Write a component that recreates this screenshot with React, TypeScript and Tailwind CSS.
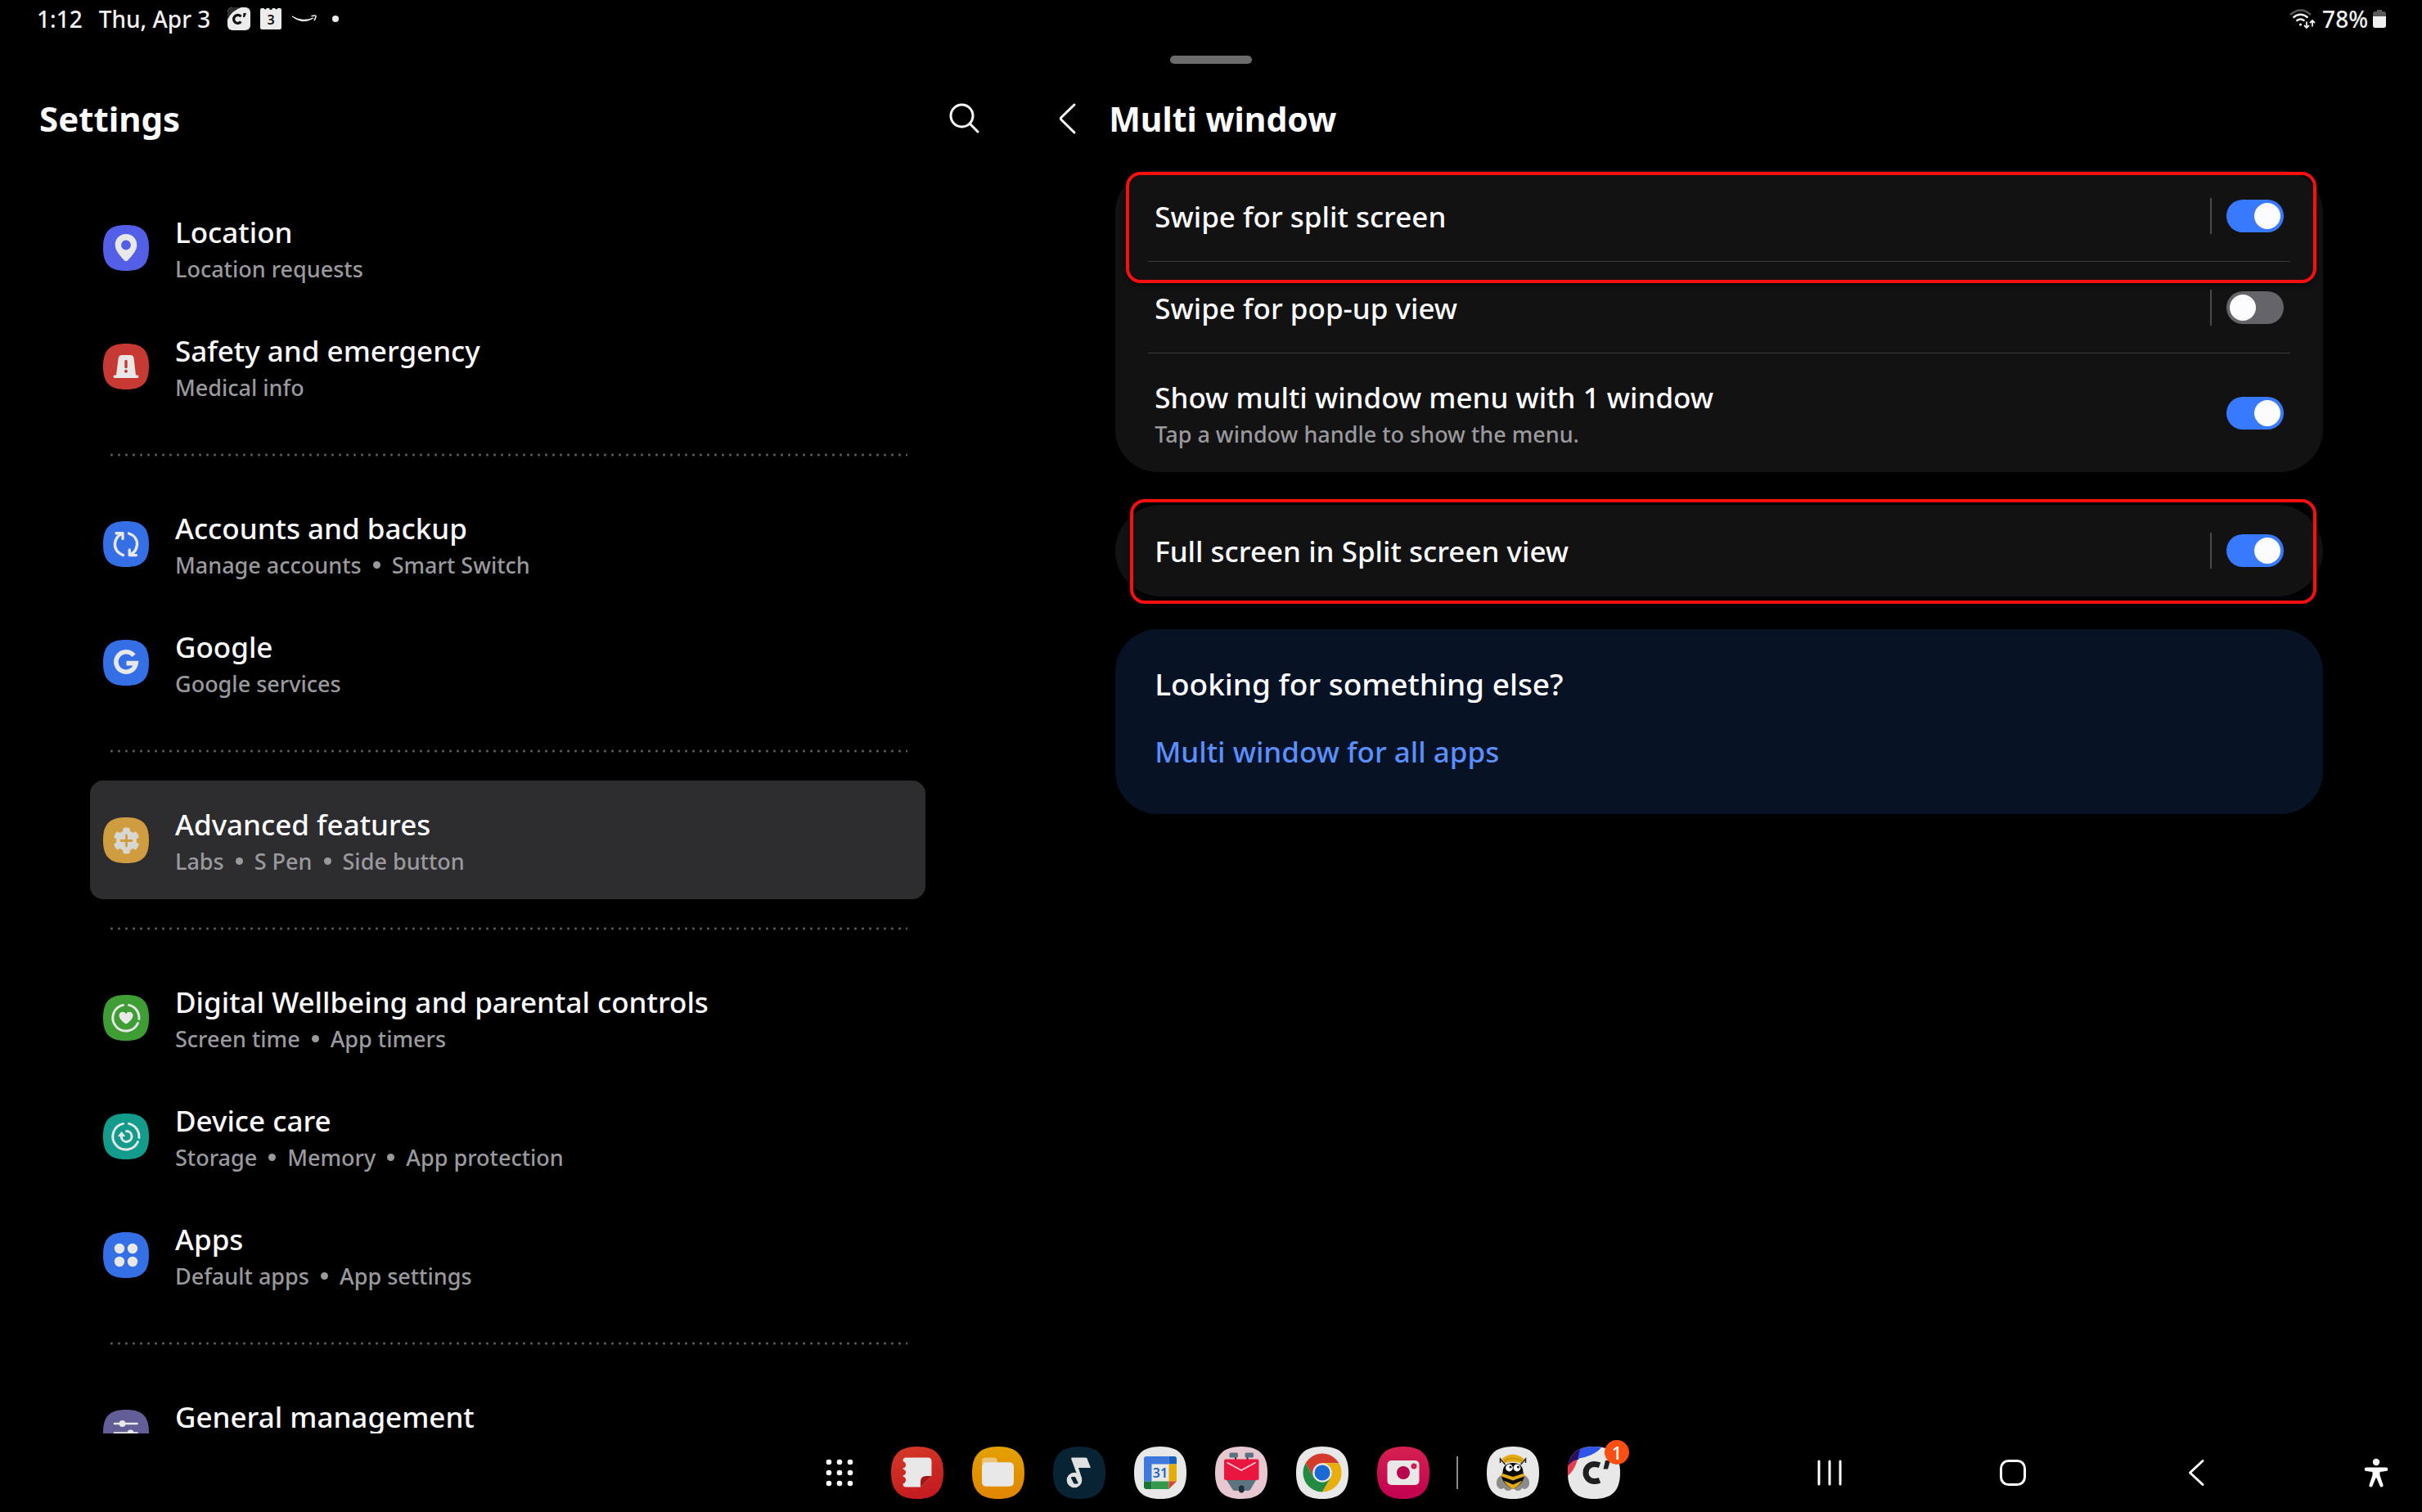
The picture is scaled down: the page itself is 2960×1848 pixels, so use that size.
import { useId, useState } from "react";
import type { ReactNode } from "react";

/* ---------- shared shapes ---------- */

const SQUIRCLE = "M32 0C54 0 64 10 64 32S54 64 32 64 0 54 0 32 10 0 32 0Z";

function SettingIcon({ color, children }: { color: string; children: ReactNode }) {
  return (
    <svg viewBox="0 0 56 56" className="size-14 shrink-0" aria-hidden="true">
      <path d="M28 0C48 0 56 8 56 28S48 56 28 56 0 48 0 28 8 0 28 0Z" fill={color} />
      {children}
    </svg>
  );
}

const INK = "#e8e8e8";

function Ring() {
  return (
    <g fill="none" stroke={INK} strokeWidth="3" strokeLinecap="round">
      <path d="M31.500 12.400A16 16 0 0 1 43.900 29.500" />
      <path d="M42.500 34.500A16 16 0 1 1 24.500 12.400" />
    </g>
  );
}

const icons = {
  location: (
    <SettingIcon color="#535fe6">
      <path
        fillRule="evenodd"
        fill={INK}
        d="M28 11C20.500 11 14.700 16.800 14.700 24.200C14.700 31.500 21 37.500 25.800 43.200Q28 45.400 30.200 43.200C35 37.500 41.300 31.500 41.300 24.200C41.300 16.800 35.500 11 28 11ZM28 18.600A5.900 5.900 0 1 1 28 30.400A5.900 5.900 0 1 1 28 18.600Z"
      />
    </SettingIcon>
  ),
  safety: (
    <SettingIcon color="#c63a33">
      <path fill={INK} d="M23 14H33.500Q37 14 37.500 17.500L40 38.500H42A1.800 1.800 0 0 1 42 42H14A1.800 1.800 0 0 1 14 38.500H16L18.700 17.500Q19.200 14 23 14Z" />
      <path d="M28 21.500V28.500" stroke="#c63a33" strokeWidth="3.400" strokeLinecap="round" />
      <circle cx="28" cy="33.700" r="2" fill="#c63a33" />
    </SettingIcon>
  ),
  accounts: (
    <SettingIcon color="#356fe6">
      <g fill="none" stroke={INK} strokeWidth="3.400" strokeLinecap="round" strokeLinejoin="round">
        <path d="M24.500 41.500C17 38.500 14 33 14.500 27C15 22 18.500 17.500 23 15" />
        <path d="M16 14.800H24V21.500" />
        <path d="M31.500 15C38.500 17.500 42 23 41.500 29C41 34.500 38 38.500 33.500 41" />
        <path d="M40.500 41.600H32.300V35" />
      </g>
    </SettingIcon>
  ),
  google: (
    <SettingIcon color="#356fe6">
      <path d="M37.600 19.300A12.200 12.200 0 1 0 40.200 28.600H28.500" fill="none" stroke={INK} strokeWidth="5.600" />
    </SettingIcon>
  ),
  advanced: (
    <SettingIcon color="#cf9c3f">
      <g fill="#d8d6d1">
        <circle cx="28.500" cy="28.500" r="12.400" />
        {[0, 60, 120].map((angle) => (
          <rect key={angle} x="24.200" y="12.600" width="8.600" height="31.800" rx="2.500" transform={`rotate(${angle} 28.500 28.500)`} />
        ))}
      </g>
      <path d="M28.500 22V35M22 28.500H35" stroke="#cf9c3f" strokeWidth="2.800" strokeLinecap="round" />
    </SettingIcon>
  ),
  wellbeing: (
    <SettingIcon color="#3f9e33">
      <Ring />
      <path
        fill={INK}
        d="M28 35.600Q27.200 35.600 25 33.500C22.500 31.200 19.500 28.500 19.500 25.200C19.500 20.500 25.500 19.300 28 23.200C30.500 19.300 36.500 20.500 36.500 25.200C36.500 28.500 33.500 31.200 31 33.500Q28.800 35.600 28 35.600Z"
      />
    </SettingIcon>
  ),
  care: (
    <SettingIcon color="#139c8c">
      <Ring />
      <path d="M28.500 21.600A6.400 6.400 0 1 1 22.400 29.500V27" fill="none" stroke={INK} strokeWidth="3" strokeLinecap="round" />
      <path d="M22.600 22.600L26.600 27.600H18.600Z" fill={INK} stroke={INK} strokeWidth="1" strokeLinejoin="round" />
    </SettingIcon>
  ),
  apps: (
    <SettingIcon color="#356fe6">
      <g fill={INK}>
        <circle cx="20" cy="20" r="6.200" />
        <circle cx="36" cy="20" r="6.200" />
        <circle cx="20" cy="36" r="6.200" />
        <circle cx="36" cy="36" r="6.200" />
      </g>
    </SettingIcon>
  ),
  general: (
    <SettingIcon color="#625f98">
      <g stroke={INK} strokeWidth="2.600" strokeLinecap="round" fill={INK}>
        <path d="M14 17H41.500M14 28.500H41.500M14 40H41.500" />
        <circle cx="23.500" cy="17" r="2.600" />
        <circle cx="33.500" cy="28.500" r="2.600" />
        <circle cx="23.500" cy="40" r="2.600" />
      </g>
    </SettingIcon>
  ),
};

/* ---------- left pane ---------- */

type Item = { icon: ReactNode; title: string; details: string[]; selected?: boolean };

const groups: Item[][] = [
  [
    { icon: icons.location, title: "Location", details: ["Location requests"] },
    { icon: icons.safety, title: "Safety and emergency", details: ["Medical info"] },
  ],
  [
    { icon: icons.accounts, title: "Accounts and backup", details: ["Manage accounts", "Smart Switch"] },
    { icon: icons.google, title: "Google", details: ["Google services"] },
  ],
  [{ icon: icons.advanced, title: "Advanced features", details: ["Labs", "S Pen", "Side button"], selected: true }],
  [
    { icon: icons.wellbeing, title: "Digital Wellbeing and parental controls", details: ["Screen time", "App timers"] },
    { icon: icons.care, title: "Device care", details: ["Storage", "Memory", "App protection"] },
    { icon: icons.apps, title: "Apps", details: ["Default apps", "App settings"] },
  ],
  [{ icon: icons.general, title: "General management", details: [] }],
];

function SettingsLink({ item }: { item: Item }) {
  return (
    <a
      href="#"
      aria-current={item.selected ? "page" : undefined}
      className={`flex h-[145px] items-center gap-8 rounded-2xl px-4 ${item.selected ? "bg-[#2d2d2f]" : ""}`}
    >
      {item.icon}
      <span className="flex flex-col pt-[2px]">
        <span className="text-[35px] leading-[50px]">{item.title}</span>
        <span className="flex min-h-10 items-center gap-[14px] text-[27px] leading-10 text-[#99999e]">
          {item.details.map((detail, i) => (
            <span key={detail} className="flex items-center gap-[14px]">
              {i > 0 && <span className="size-[9px] rounded-full bg-[#99999e]" />}
              {detail}
            </span>
          ))}
        </span>
      </span>
    </a>
  );
}

function SettingsPane() {
  return (
    <section className="flex w-[42%] flex-col">
      <header className="mt-[67px] flex h-16 shrink-0 items-center justify-between pr-8 pl-12">
        <h1 className="text-[42px] leading-[64px] font-bold">Settings</h1>
        <button aria-label="Search" className="flex size-16 items-center justify-center">
          <svg viewBox="0 0 40 40" className="size-10" fill="none" stroke="#fcfcff" strokeWidth="3" strokeLinecap="round">
            <circle cx="16.500" cy="16.500" r="13.500" />
            <path d="M26.300 26.300L36 36" />
          </svg>
        </button>
      </header>
      <nav aria-label="Settings" className="mt-[53px] min-h-0 flex-1 overflow-hidden pr-28 pl-[110px]">
        {groups.map((group, i) => (
          <div key={group[0].title}>
            {i > 0 && (
              <div className="flex h-[72px] items-center px-[22px]">
                <div className="h-1 flex-1 bg-[radial-gradient(circle,#5c5c5e_1px,transparent_2px)] bg-[length:9px_4px]" />
              </div>
            )}
            {group.map((item) => (
              <SettingsLink key={item.title} item={item} />
            ))}
          </div>
        ))}
      </nav>
    </section>
  );
}

/* ---------- right pane ---------- */

function Toggle({ id, initial }: { id: string; initial: boolean }) {
  const [on, setOn] = useState(initial);
  return (
    <input
      id={id}
      type="checkbox"
      role="switch"
      checked={on}
      onChange={() => setOn(!on)}
      className="h-10 w-[70px] shrink-0 appearance-none rounded-full bg-[#656468] p-1 before:block before:size-8 before:rounded-full before:bg-[#fcfcff] checked:bg-[#387aff] checked:before:ml-[30px]"
    />
  );
}

function ToggleRow({
  title,
  note,
  initial,
  split = true,
  className,
}: {
  title: string;
  note?: string;
  initial: boolean;
  split?: boolean;
  className: string;
}) {
  const id = useId();
  return (
    <div className={`mx-10 flex items-center px-2 ${className}`}>
      <label htmlFor={id} className="flex flex-1 flex-col pt-[2px]">
        <span className="text-[35px] leading-[50px]">{title}</span>
        {note && <span className="text-[27px] leading-10 text-[#99999e]">{note}</span>}
      </label>
      {split && <span className="mr-[18px] h-11 w-[2px] bg-[#4a4a4c]" />}
      <Toggle id={id} initial={initial} />
    </div>
  );
}

function Highlight({ className }: { className: string }) {
  return (
    <div
      className={`pointer-events-none absolute rounded-[18px] border-4 border-[#fa0f0f] shadow-[0_3px_6px_rgba(0,0,0,0.5)] ${className}`}
    />
  );
}

function DetailPane() {
  return (
    <section className="flex-1">
      <header className="mt-[67px] flex h-16 items-center gap-[18px] pl-[30px]">
        <button aria-label="Back" className="flex size-16 items-center justify-center">
          <svg viewBox="0 0 40 40" className="size-10" fill="none" stroke="#fcfcff" strokeWidth="3" strokeLinecap="round" strokeLinejoin="round">
            <path d="M28 3L12 18.500Q10.800 19.800 12 21.200L28 37" />
          </svg>
        </button>
        <h2 className="text-[41px] leading-[64px] font-bold">Multi window</h2>
      </header>
      <div className="mt-[31px] flex flex-col gap-10 pr-[121px] pl-[120px]">
        <div className="relative rounded-[52px] bg-[#121212]">
          <ToggleRow title="Swipe for split screen" initial className="h-28 border-b border-[#3a3a3b]" />
          <ToggleRow title="Swipe for pop-up view" initial={false} className="h-28 border-b border-[#3a3a3b]" />
          <ToggleRow
            title="Show multi window menu with 1 window"
            note="Tap a window handle to show the menu."
            initial
            split={false}
            className="h-[145px]"
          />
          <Highlight className="top-[2px] right-2 left-[13px] h-[136px]" />
        </div>
        <div className="relative rounded-[56px] bg-[#121212]">
          <ToggleRow title="Full screen in Split screen view" initial className="h-28" />
          <Highlight className="-top-[7px] right-2 -bottom-[9px] left-[18px]" />
        </div>
        <div className="flex flex-col items-start gap-[26px] rounded-[52px] bg-[#071225] px-12 pt-[37px] pb-[49px]">
          <h3 className="text-[37px] leading-[60px]">Looking for something else?</h3>
          <a href="#" className="text-[35px] leading-[54px] text-[#5a8ffc]">
            Multi window for all apps
          </a>
        </div>
      </div>
    </section>
  );
}

/* ---------- status bar ---------- */

function StatusBar() {
  return (
    <div className="flex h-[46px] shrink-0 items-center justify-between pr-11 pl-[45px] text-[28px] leading-[46px] text-[#f0f0f0]">
      <div className="flex items-center">
        <span>1:12</span>
        <span className="ml-5">Thu, Apr 3</span>
        <div className="ml-[21px] flex items-center gap-3">
          <svg viewBox="0 0 28 28" className="size-7" aria-hidden="true">
            <rect width="28" height="28" rx="6" fill="#ececec" />
            <path d="M0 15V6A6 6 0 0 1 6 0H17Q5 4 0 15Z" fill="#2c2c2c" />
            <path d="M16.500 11.200A5 5 0 1 0 16.500 17.600" fill="none" stroke="#111" strokeWidth="3.200" />
            <path d="M19.500 7H23L21 12H19Z" fill="#111" />
          </svg>
          <svg viewBox="0 0 26 28" className="h-7 w-[26px]" aria-hidden="true">
            <path d="M2 1H4.500A1.800 1.800 0 0 0 8 1H11A1.800 1.800 0 0 0 15 1H18A1.800 1.800 0 0 0 21.500 1H24Q26 1 26 3V25Q26 27 24 27H2Q0 27 0 25V3Q0 1 2 1Z" fill="#ececec" />
            <text x="13" y="21" textAnchor="middle" fontSize="16" fontWeight="600" fill="#111">
              3
            </text>
          </svg>
          <svg viewBox="0 0 32 12" className="h-3 w-8" fill="none" stroke="#ececec" aria-hidden="true">
            <path d="M1 3Q14 10.500 27 5Q14 13.500 1 3Z" fill="#ececec" strokeWidth="1" />
            <path d="M24.500 2.800Q29.500 1.500 30 2.500T28 8" strokeWidth="1.600" />
          </svg>
          <span className="ml-[6px] size-2 rounded-full bg-[#ececec]" />
        </div>
      </div>
      <div className="flex items-center">
        <svg viewBox="0 0 32 24" className="mr-2 h-6 w-8" fill="none" stroke="#f0f0f0" strokeWidth="2.400" aria-hidden="true">
          <path d="M1 7Q14 -4 26 7" stroke="#5a5a5a" />
          <path d="M4.500 10.500Q13.500 3 22.500 10.500" />
          <path d="M8.500 14.500Q13.500 10.500 18.500 14.500" />
          <circle cx="13.500" cy="19" r="1.600" fill="#f0f0f0" stroke="none" />
          <path d="M21 15.500V23M18 20L21 23L24 20M28 21.500V14M25 17L28 14L31 17" strokeWidth="1.800" />
        </svg>
        <span>78%</span>
        <svg viewBox="0 0 16 24" className="ml-[6px] h-6 w-4" aria-hidden="true">
          <path d="M5 1H11V3H13Q16 3 16 6V9H0V6Q0 3 3 3H5Z" fill="#5a5a5a" />
          <path d="M0 9H16V20Q16 23 13 23H3Q0 23 0 20Z" fill="#f0f0f0" />
        </svg>
      </div>
    </div>
  );
}

/* ---------- taskbar ---------- */

function AppIcon({ label, children }: { label: string; children: ReactNode }) {
  return (
    <button aria-label={label} className="relative size-16">
      <svg viewBox="0 0 64 64" className="size-16">
        {children}
      </svg>
    </button>
  );
}

function Dock() {
  return (
    <div className="flex items-center gap-[35px] pl-[6px]">
      <button aria-label="All apps" className="-mr-3 flex size-20 items-center justify-center">
        <svg viewBox="0 0 34 34" className="size-[34px]" fill="#fff">
          {[4, 17, 30].flatMap((y) => [4, 17, 30].map((x) => <circle key={`${x}-${y}`} cx={x} cy={y} r="3.300" />))}
        </svg>
      </button>

      <AppIcon label="Notes">
        <defs>
          <linearGradient id="notes" x1="0" y1="0" x2="0.300" y2="1">
            <stop stopColor="#d53a26" />
            <stop offset="1" stopColor="#c41c20" />
          </linearGradient>
        </defs>
        <path d={SQUIRCLE} fill="url(#notes)" />
        <path
          fill={INK}
          d="M18 13.500H45Q49.500 13.500 49.500 18V36L36 49.500H18Q14.500 49.500 14.500 45.500Q18 44.500 18 40.500Q18 37.500 14.500 36.500V35.500Q18 34.500 18 31.500Q18 28.500 14.500 27.500V26.500Q18 25.500 18 22.500Q18 19 14.500 18Q14.500 13.500 18 13.500Z"
        />
        <path d="M36 49.500V43Q36 36 43 36H49.500Z" fill="#a3151b" />
      </AppIcon>

      <AppIcon label="My Files">
        <defs>
          <linearGradient id="files" x1="0" y1="0" x2="0" y2="1">
            <stop stopColor="#e3a100" />
            <stop offset="1" stopColor="#e08500" />
          </linearGradient>
        </defs>
        <path d={SQUIRCLE} fill="url(#files)" />
        <path d="M16 13.500H27Q30 13.500 30.500 16.500L31.500 21H12V17.500Q12 13.500 16 13.500Z" fill="#eac47d" />
        <rect x="12" y="19.300" width="39" height="29.500" rx="5" fill={INK} />
      </AppIcon>

      <AppIcon label="Music">
        <path d={SQUIRCLE} fill="#082434" />
        <path d="M23 13.500H40Q41 13.500 41.500 14.500L46 26H31L35 38.500L31 39L22.200 15Q22 13.500 23 13.500Z" fill="#e0e0e0" />
        <circle cx="26" cy="41" r="9.300" fill="#e0e0e0" />
        <path d="M22.500 37H27L30.500 44Q31 45.500 29.500 45.500H25.500L22 38.500Z" fill="#082434" />
      </AppIcon>

      <AppIcon label="Calendar">
        <path d={SQUIRCLE} fill="#e8e8e8" />
        <path d="M15 12H42.500V21.500H21.500V42.500H12V15Q12 12 15 12Z" fill="#3f79de" />
        <path d="M42.500 12H49Q52 12 52 15V21.500H42.500Z" fill="#175fc0" />
        <path d="M42.500 21.500H52V42.500H42.500Z" fill="#e5ac05" />
        <path d="M21.500 42.500H42.500V52H21.500Z" fill="#34994c" />
        <path d="M12 42.500H21.500V52H15Q12 52 12 49Z" fill="#1a7336" />
        <path d="M42.500 42.500H52L42.500 52Z" fill="#d9442f" />
        <text x="32" y="38" textAnchor="middle" fontSize="16" fontWeight="600" fill="#1b65c9">
          31
        </text>
      </AppIcon>

      <AppIcon label="Mail">
        <path d={SQUIRCLE} fill="#e8c8d0" />
        <path d="M25 12V16M39.500 12V16" stroke="#22303a" strokeWidth="2" />
        <rect x="17.500" y="7.500" width="10.500" height="6" rx="1.500" fill="#5c7380" />
        <rect x="36.500" y="7.500" width="10.500" height="6" rx="1.500" fill="#5c7380" />
        <path d="M14 41H50L43.500 52Q42.500 54 40.500 54H24Q22 54 21 52Z" fill="#5c7380" />
        <rect x="11" y="15.500" width="42.500" height="25.500" rx="2" fill="#e9163f" />
        <path d="M14.500 19.500L32 29L49.500 19.500" fill="none" stroke="#f3c9d2" strokeWidth="1.800" />
        <rect x="29" y="47.500" width="6.500" height="9" rx="3" fill="#22303a" />
      </AppIcon>

      <AppIcon label="Chrome">
        <path d={SQUIRCLE} fill="#e8e8e8" />
        <g transform="translate(32 32)">
          <path d="M-20.350 -11.750A23.500 23.500 0 0 1 20.350 -11.750H0L-10.180 5.870Z" fill="#d33b2c" />
          <path d="M20.350 -11.750A23.500 23.500 0 0 1 0 23.500L10.180 5.870L0 -11.750Z" fill="#e8ae0c" />
          <path d="M0 23.500A23.500 23.500 0 0 1 -20.350 -11.750L-10.180 5.870L10.180 5.870Z" fill="#238a42" />
          <circle r="11.750" fill="#e8e8e8" />
          <circle r="9.500" fill="#1a6ad6" />
        </g>
      </AppIcon>

      <AppIcon label="Camera">
        <defs>
          <linearGradient id="camera" x1="0" y1="0" x2="0" y2="1">
            <stop stopColor="#d42150" />
            <stop offset="1" stopColor="#c30050" />
          </linearGradient>
        </defs>
        <path d={SQUIRCLE} fill="url(#camera)" />
        <rect x="12.500" y="17" width="39" height="30" rx="5" fill={INK} />
        <circle cx="32" cy="32" r="8" fill="#b8004d" />
        <circle cx="45" cy="24" r="3.600" fill="#cf1f4f" />
      </AppIcon>

      <span className="-ml-[2px] h-10 w-[2px] bg-[#8a8a8a]" />

      <AppIcon label="Bee">
        <path d={SQUIRCLE} fill="#e8e8e8" />
        <g fill="#8b8b8b">
          <ellipse cx="18.500" cy="43.500" rx="6.500" ry="8.500" transform="rotate(15 18.500 43.500)" />
          <ellipse cx="45.500" cy="43.500" rx="6.500" ry="8.500" transform="rotate(-15 45.500 43.500)" />
          <ellipse cx="26" cy="50" rx="5" ry="4" />
          <ellipse cx="38" cy="50" rx="5" ry="4" />
        </g>
        <path d="M18.500 15Q32 4 45.500 15L42 20.500Q32 16.500 22 20.500Z" fill="#e3aa14" />
        <path d="M21 17.500Q32 11 43 17.500" fill="none" stroke="#a87a08" strokeWidth="0.800" />
        <path d="M16.500 20V15L22.500 22M47.500 20V15L41.500 22" fill="none" stroke="#222" strokeWidth="1.500" />
        <path d="M19.500 32Q19.500 20 32 20T44.500 32L46 34Q46 45 32 52Q18 45 18 34Z" fill="#0a0a0a" />
        <path d="M18 32.500L32 37L46 32.500V36.500L32 41.500L18 36.500Z" fill="#e3aa14" />
        <path d="M20.500 41.500L32 46.500L43.500 41.500Q39 48.500 32 52Q25 48.500 20.500 41.500Z" fill="#e3aa14" />
        <circle cx="27.500" cy="26" r="4.400" fill="#fff" />
        <circle cx="37" cy="26" r="4.400" fill="#fff" />
        <circle cx="29" cy="25" r="1.600" fill="#111" />
        <circle cx="38.500" cy="25" r="1.600" fill="#111" />
      </AppIcon>

      <button aria-label="C app, 1 notification" className="relative size-16">
        <svg viewBox="0 0 64 64" className="size-16">
          <clipPath id="capp">
            <path d={SQUIRCLE} />
          </clipPath>
          <g clipPath="url(#capp)">
            <rect width="64" height="64" fill="#e8e8e8" />
            <path d="M0 36V14Q10 14 12 15.500Q9 28 0 36Z" fill="#e83c4c" />
            <path d="M0 24V0H20L13 16Q6 16 0 24Z" fill="#2c0c5c" />
            <path d="M16 0H42Q34 11 12 15Z" fill="#2f55e8" />
          </g>
          <path d="M39 22.800Q35.500 21.500 32.500 21.500A10.500 10.500 0 0 0 32.500 42.500Q35.500 42.500 39 41.200" fill="none" stroke="#1f1f1f" strokeWidth="7" />
          <path d="M46 17H52L49 27.500H43.500Z" fill="#1f1f1f" />
        </svg>
        <span className="absolute -top-2 -right-[11px] flex size-[30px] items-center justify-center rounded-full bg-[#fb4f14] text-[22px] leading-none text-white">
          1
        </span>
      </button>
    </div>
  );
}

function SystemKeys() {
  return (
    <div className="flex items-center justify-end gap-40 pr-6">
      <button aria-label="Recent apps" className="flex size-16 items-center justify-center">
        <svg viewBox="0 0 32 34" className="h-[34px] w-8" stroke="#fff" strokeWidth="3" strokeLinecap="round">
          <path d="M3 3V31M16 3V31M29 3V31" />
        </svg>
      </button>
      <button aria-label="Home" className="flex size-16 items-center justify-center">
        <svg viewBox="0 0 34 34" className="size-[34px]" fill="none" stroke="#fff" strokeWidth="3">
          <rect x="2.500" y="2.500" width="29" height="29" rx="9" />
        </svg>
      </button>
      <button aria-label="Back" className="flex size-16 items-center justify-center">
        <svg viewBox="0 0 34 34" className="size-[34px]" fill="none" stroke="#fff" strokeWidth="3" strokeLinecap="round" strokeLinejoin="round">
          <path d="M25 2.500L9.500 17L25 31.500" />
        </svg>
      </button>
      <button aria-label="Accessibility" className="-ml-1 flex size-16 items-center justify-center">
        <svg viewBox="0 0 30 36" className="h-9 w-[30px]" fill="#fff">
          <circle cx="15" cy="5" r="4.200" />
          <path d="M3 11.500H27A2.300 2.300 0 0 1 27 16.100L19.500 17V21L23.500 33A2 2 0 0 1 19.500 34L15.500 24.500H14.500L10.500 34A2 2 0 0 1 6.500 33L10.500 21V17L3 16.100A2.300 2.300 0 0 1 3 11.500Z" />
        </svg>
      </button>
    </div>
  );
}

export default function App() {
  return (
    <div className="relative flex h-screen flex-col bg-black font-['Noto_Sans',sans-serif] font-medium text-[#fcfcff]">
      <StatusBar />
      <div className="absolute top-[68px] left-1/2 h-[10px] w-[100px] -translate-x-1/2 rounded-full bg-[#6c6c6c]" />
      <main className="flex min-h-0 flex-1">
        <SettingsPane />
        <DetailPane />
      </main>
      <footer className="grid h-24 shrink-0 grid-cols-[1fr_auto_1fr] items-center">
        <span />
        <Dock />
        <SystemKeys />
      </footer>
    </div>
  );
}
